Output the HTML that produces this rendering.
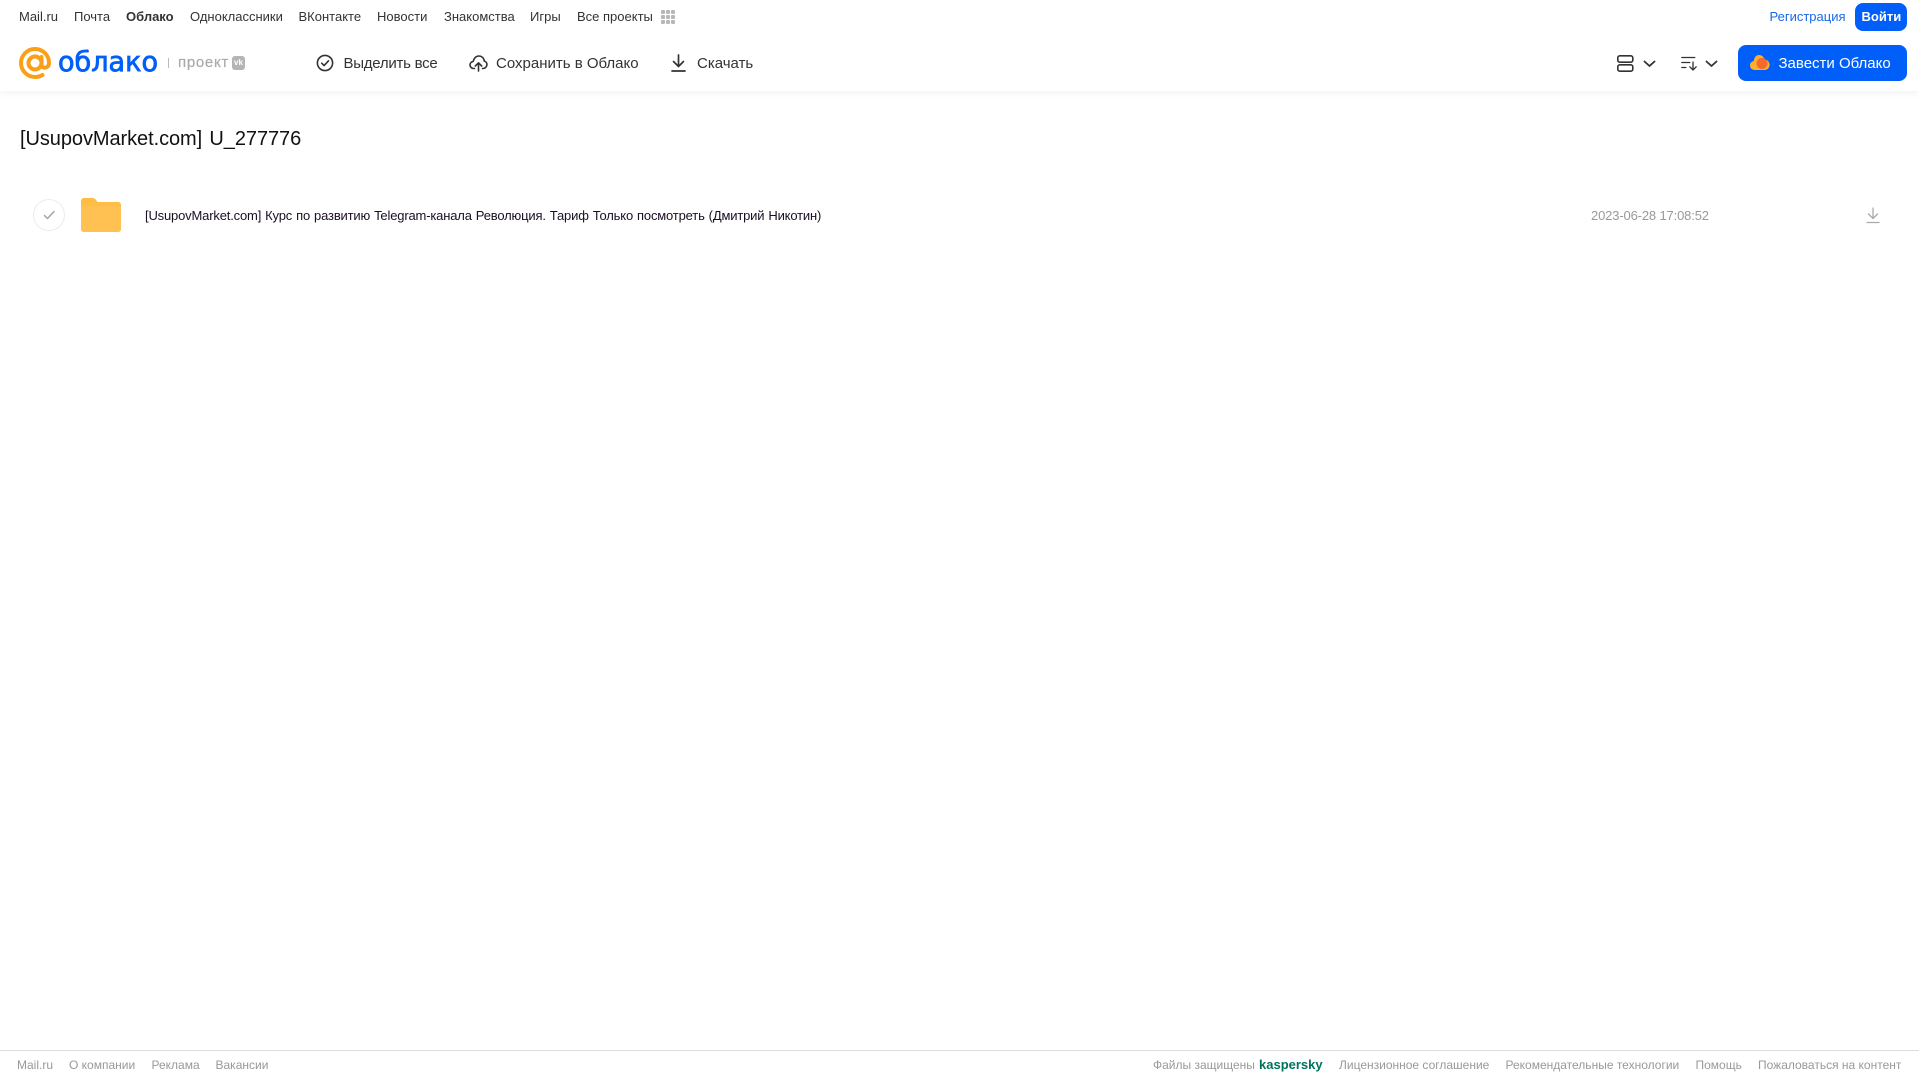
<!DOCTYPE html>
<html lang="ru"><head><meta charset="utf-8"><title>Облако</title>
<style>
html,body{margin:0;padding:0;background:#fff;width:1919px;height:1079px;overflow:hidden}
body{position:relative;font-family:"Liberation Sans",Arial,sans-serif}
.t{position:absolute;white-space:nowrap;line-height:16px}
.n{top:9px;font-size:13px;color:#333}
.b{top:56px;font-size:15px;color:#333}
.f{top:1057px;font-size:12px;color:#999}
svg{position:absolute;overflow:visible}
#hd{position:absolute;left:0;top:0;width:1919px;height:91px;background:#fff;box-shadow:0 1px 8px rgba(0,0,0,.07)}
</style></head><body>
<div id="hd"></div>
<span class="t n" style="left:19px">Mail.ru</span>
<span class="t n" style="left:74px">Почта</span>
<span class="t n" style="left:126px;font-weight:bold">Облако</span>
<span class="t n" style="left:190px">Одноклассники</span>
<span class="t n" style="left:298.500px">ВКонтакте</span>
<span class="t n" style="left:377px">Новости</span>
<span class="t n" style="left:444px">Знакомства</span>
<span class="t n" style="left:530px">Игры</span>
<span class="t n" style="left:577px">Все проекты</span>
<svg style="left:661px;top:10px" width="15" height="14" fill="#b8b8b8"><rect x="0" y="0" width="4" height="4" rx="1"/><rect x="5" y="0" width="4" height="4" rx="1"/><rect x="10" y="0" width="4" height="4" rx="1"/><rect x="0" y="5" width="4" height="4" rx="1"/><rect x="5" y="5" width="4" height="4" rx="1"/><rect x="10" y="5" width="4" height="4" rx="1"/><rect x="0" y="10" width="4" height="4" rx="1"/><rect x="5" y="10" width="4" height="4" rx="1"/><rect x="10" y="10" width="4" height="4" rx="1"/></svg>
<span class="t" style="left:1769.500px;top:9px;font-size:13px;color:#1a6ae8">Регистрация</span>
<div style="position:absolute;left:1855px;top:3px;width:52px;height:28px;background:#005ff9;border-radius:8px"></div>
<span class="t" style="left:1861.500px;top:9px;font-size:13px;color:#fff;font-weight:bold">Войти</span>

<svg style="left:19px;top:47px" width="33" height="33" fill="none"><circle cx="16" cy="16" r="6.500" stroke="#fa9f16" stroke-width="4"/><path d="M22.500 10v7.500c0 4.500 7.500 4.500 7.500-1.500C30 8 23.700 2 16 2S2 8.300 2 16s6.300 14 14 14c3 0 5.500-.8 7.500-2" stroke="#fa9f16" stroke-width="4" stroke-linecap="round"/></svg>
<svg style="left:58px;top:44px" width="102" height="34"><text x="0" y="27" font-family="DejaVu Sans" font-size="28" fill="#005ff9" stroke="#005ff9" stroke-width=".8" textLength="100" lengthAdjust="spacingAndGlyphs">облако</text></svg>
<div style="position:absolute;left:168px;top:58px;width:1px;height:10px;background:#bbb"></div>
<span class="t" style="left:178px;top:55px;font-size:15px;color:#aaa;letter-spacing:.7px;-webkit-text-stroke:.2px #aaa">проект</span>
<div style="position:absolute;left:232px;top:56px;width:13px;height:14px;background:#b5b5b5;border-radius:3px"></div>
<span class="t" style="left:234px;top:55px;font-size:8px;color:#fff;font-weight:bold">vk</span>

<svg style="left:316px;top:54px" width="18" height="18" fill="none" stroke="#333" stroke-width="1.600"><circle cx="9" cy="9" r="7.600"/><path d="M5.700 9.200l2.400 2.400 4.400-4.800" stroke-linecap="round" stroke-linejoin="round"/></svg>
<span class="t b" style="left:343.500px;letter-spacing:-.25px">Выделить все</span>
<svg style="left:469px;top:54px" width="19" height="18" fill="none" stroke="#333" stroke-width="1.600" stroke-linecap="round" stroke-linejoin="round"><path d="M5.500 14.500H4.800C2.600 14.500 1 13 1 11c0-1.800 1.300-3.300 3.200-3.600C4.800 4.300 7 2 9.800 2c3 0 5.200 2.200 5.500 5.100 1.700.4 2.800 2 2.600 3.800-.2 2-1.800 3.600-3.900 3.600h-.5"/><path d="M9.500 17V9M6.300 12l3.200-3.200L12.700 12"/></svg>
<span class="t b" style="left:496px">Сохранить в Облако</span>
<svg style="left:671px;top:54px" width="15" height="18" fill="none" stroke="#333" stroke-width="1.700" stroke-linecap="round" stroke-linejoin="round"><path d="M7.500 1v11.500M2.500 7.500l5 5 5-5M1 17h13"/></svg>
<span class="t b" style="left:697px">Скачать</span>

<svg style="left:1617px;top:55px" width="17" height="17" fill="none" stroke="#333" stroke-width="1.600"><rect x=".8" y=".8" width="15" height="6.400" rx="2"/><rect x=".8" y="9.800" width="15" height="6.400" rx="2"/></svg>
<svg style="left:1643px;top:60px" width="13" height="8" fill="none" stroke="#333" stroke-width="1.800" stroke-linecap="round" stroke-linejoin="round"><path d="M1.500 1.500l5 4.500 5-4.500"/></svg>
<svg style="left:1681px;top:56px" width="17" height="15" fill="none" stroke="#333" stroke-width="1.300" stroke-linecap="round" stroke-linejoin="round"><path d="M.8 1.500h13M.8 6.500h8M.8 11.500h4"/><path d="M12 6v8M8.800 10.800l3.200 3.200 3.200-3.200"/></svg>
<svg style="left:1705px;top:60px" width="13" height="8" fill="none" stroke="#333" stroke-width="1.800" stroke-linecap="round" stroke-linejoin="round"><path d="M1.500 1.500l5 4.500 5-4.500"/></svg>
<div style="position:absolute;left:1738px;top:45px;width:169px;height:36px;background:#005ff9;border-radius:8px"></div>
<svg style="left:1750px;top:54px" width="20" height="16"><path d="M5 16C2 16 0 14 0 11.500 0 9.200 1.600 7.400 3.800 7 4.200 3 6.500 1 9 1c2.600 0 4.800 1.800 5.400 4.500 3 .2 5.200 2.500 5.200 5.300 0 2.900-2.200 5.200-5 5.200z" fill="#ffae2e"/><circle cx="12" cy="9.500" r="5.500" fill="#f5692c"/></svg>
<span class="t" style="left:1778.500px;top:56px;font-size:15px;color:#fff">Завести Облако</span>

<span class="t" style="left:20px;top:126px;font-size:20px;line-height:26px;letter-spacing:-.07px;word-spacing:1.800px;color:#111">[UsupovMarket.com] U_277776</span>

<div style="position:absolute;left:33px;top:199px;width:30px;height:30px;border:1px solid #ececec;border-radius:50%"></div>
<svg style="left:43px;top:210px" width="13" height="10" fill="none" stroke="#a0a0a0" stroke-width="1.400" stroke-linecap="round" stroke-linejoin="round"><path d="M1.500 5.500l3 3 6.500-7"/></svg>
<svg style="left:81px;top:198px" width="40" height="34"><path d="M0 3C0 1.300 1.300 0 3 0h8.500c1.500 0 2.500.6 3.500 1.800L16.500 4H37c1.700 0 3 1.300 3 3v24c0 1.700-1.300 3-3 3H3c-1.700 0-3-1.300-3-3z" fill="#ffbd45"/><path d="M0 8h40v23c0 1.700-1.300 3-3 3H3c-1.700 0-3-1.300-3-3z" fill="#ffc252"/></svg>
<span class="t" style="left:145px;top:208px;font-size:13px;letter-spacing:-.17px;word-spacing:.56px;color:#1a0f24">[UsupovMarket.com] Курс по развитию Telegram-канала Революция. Тариф Только посмотреть (Дмитрий Никотин)</span>
<span class="t" style="left:1591px;top:208px;font-size:13px;letter-spacing:-.15px;color:#999">2023-06-28 17:08:52</span>
<svg style="left:1866px;top:207px" width="14" height="17" fill="none" stroke="#aaa" stroke-width="1.300" stroke-linecap="round" stroke-linejoin="round"><path d="M7 1v10.500M2.500 7l4.500 4.500L11.500 7M1 15.500h12"/></svg>

<div style="position:absolute;left:0;top:1050px;width:1919px;height:1px;background:#ddd"></div>
<span class="t f" style="left:17px">Mail.ru</span>
<span class="t f" style="left:69px">О компании</span>
<span class="t f" style="left:151.500px">Реклама</span>
<span class="t f" style="left:215.500px">Вакансии</span>
<span class="t f" style="left:1153px">Файлы защищены</span>
<span class="t f" style="left:1259px;font-size:13px;font-weight:bold;color:#00735f">kaspersky</span>
<span class="t f" style="left:1339px">Лицензионное соглашение</span>
<span class="t f" style="left:1505.500px">Рекомендательные технологии</span>
<span class="t f" style="left:1695.500px">Помощь</span>
<span class="t f" style="left:1758px">Пожаловаться на контент</span>
</body></html>
